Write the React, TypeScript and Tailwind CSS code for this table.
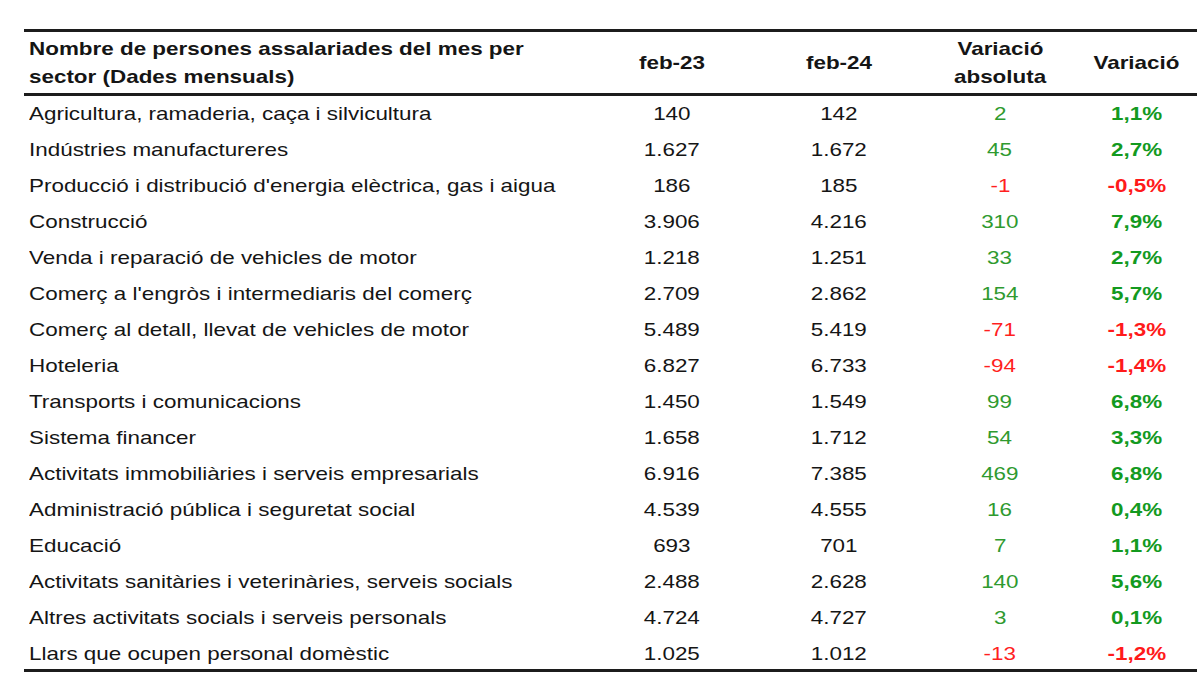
import React from "react";

type Row = [string, string, string, string, string];

const rows: Row[] = [
  ["Agricultura, ramaderia, caça i silvicultura", "140", "142", "2", "1,1%"],
  ["Indústries manufactureres", "1.627", "1.672", "45", "2,7%"],
  ["Producció i distribució d'energia elèctrica, gas i aigua", "186", "185", "-1", "-0,5%"],
  ["Construcció", "3.906", "4.216", "310", "7,9%"],
  ["Venda i reparació de vehicles de motor", "1.218", "1.251", "33", "2,7%"],
  ["Comerç a l'engròs i intermediaris del comerç", "2.709", "2.862", "154", "5,7%"],
  ["Comerç al detall, llevat de vehicles de motor", "5.489", "5.419", "-71", "-1,3%"],
  ["Hoteleria", "6.827", "6.733", "-94", "-1,4%"],
  ["Transports i comunicacions", "1.450", "1.549", "99", "6,8%"],
  ["Sistema financer", "1.658", "1.712", "54", "3,3%"],
  ["Activitats immobiliàries i serveis empresarials", "6.916", "7.385", "469", "6,8%"],
  ["Administració pública i seguretat social", "4.539", "4.555", "16", "0,4%"],
  ["Educació", "693", "701", "7", "1,1%"],
  ["Activitats sanitàries i veterinàries, serveis socials", "2.488", "2.628", "140", "5,6%"],
  ["Altres activitats socials i serveis personals", "4.724", "4.727", "3", "0,1%"],
  ["Llars que ocupen personal domèstic", "1.025", "1.012", "-13", "-1,2%"],
];

function L({ children }: { children: React.ReactNode }) {
  return <span className="inline-block origin-left scale-x-[1.18] whitespace-nowrap">{children}</span>;
}
function C({ children }: { children: React.ReactNode }) {
  return <span className="inline-block origin-center scale-x-[1.18] whitespace-nowrap">{children}</span>;
}

export default function App() {
  return (
    <div
      className="w-[1200px] h-[675px] bg-white overflow-hidden text-[#151515]"
      style={{ fontFamily: '"Liberation Sans", Arial, sans-serif' }}
    >
      <div className="ml-[24px] mr-[3px] mt-[29px] border-t-[3px] border-[#1c1c1c]">
        <div className="grid grid-cols-[566px_164px_170px_152px_1fr] items-center h-[64px] text-[19px] font-bold leading-[28px] border-b-[3px] border-[#1c1c1c]">
          <div className="pl-[5px] flex flex-col items-start">
            <L>Nombre de persones assalariades del mes per</L>
            <L>sector (Dades mensuals)</L>
          </div>
          <div className="text-center">
            <C>feb-23</C>
          </div>
          <div className="text-center">
            <C>feb-24</C>
          </div>
          <div className="flex flex-col items-center">
            <C>Variació</C>
            <C>absoluta</C>
          </div>
          <div className="text-center">
            <C>Variació</C>
          </div>
        </div>
        <div className="border-b-[3px] border-[#1c1c1c]">
          {rows.map((r, i) => {
            const neg = r[3].startsWith("-");
            const last = i === rows.length - 1;
            return (
              <div
                key={i}
                className={`grid grid-cols-[566px_164px_170px_152px_1fr] text-[19px] leading-[36px] ${
                  last ? "h-[33px] items-start" : "h-[36px] items-center"
                }`}
              >
                <div className="pl-[5px]">
                  <L>{r[0]}</L>
                </div>
                <div className="text-center">
                  <C>{r[1]}</C>
                </div>
                <div className="text-center">
                  <C>{r[2]}</C>
                </div>
                <div className={`text-center ${neg ? "text-[#ff1f1f]" : "text-[#2f9a2f]"}`}>
                  <C>{r[3]}</C>
                </div>
                <div className={`text-center font-bold ${neg ? "text-[#ff1a1a]" : "text-[#139a1f]"}`}>
                  <C>{r[4]}</C>
                </div>
              </div>
            );
          })}
        </div>
      </div>
    </div>
  );
}
